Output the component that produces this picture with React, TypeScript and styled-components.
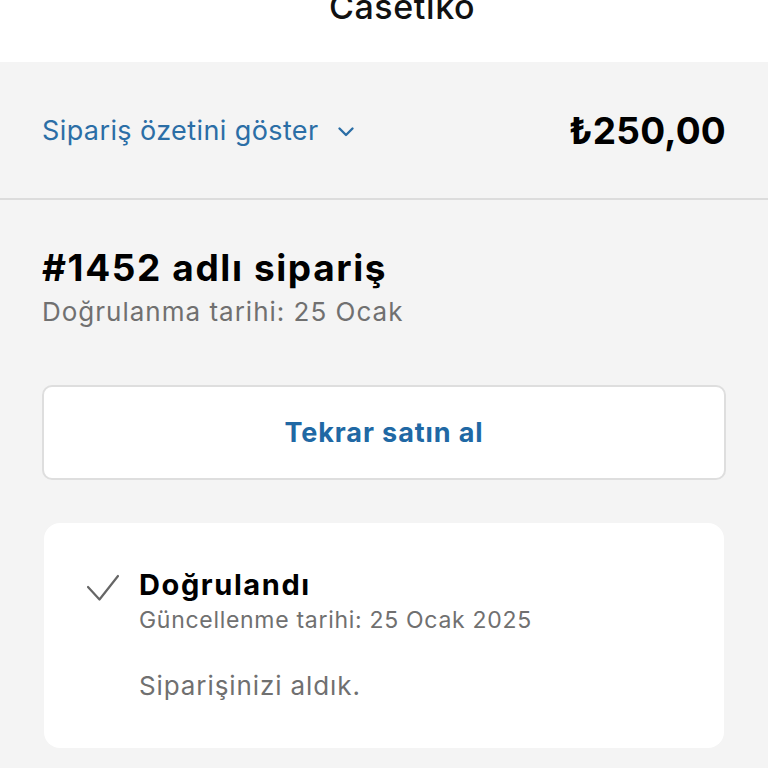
import React from "react";
import styled, { createGlobalStyle } from "styled-components";

const Global = createGlobalStyle`
  html, body { margin: 0; padding: 0; background: #f4f4f4; }
  body { font-family: Inter, "Noto Sans", sans-serif; -webkit-font-smoothing: antialiased; }
  * { box-sizing: border-box; }
`;

const Page = styled.div`
  width: 768px;
  height: 768px;
  overflow: hidden;
  display: flex;
  flex-direction: column;
  background: #f4f4f4;
`;

const Header = styled.header`
  height: 62px;
  flex: none;
  background: #ffffff;
  display: flex;
  justify-content: center;
  align-items: flex-start;
  padding-left: 36px;
  overflow: hidden;
`;

const Brand = styled.div`
  font-size: 34px;
  font-weight: 500;
  color: #111;
  line-height: 34px;
  margin-top: -10px;
  letter-spacing: 0.6px;
`;

const SummaryBar = styled.div`
  height: 138px;
  flex: none;
  border-bottom: 2px solid #dcdcdc;
  display: flex;
  align-items: center;
  justify-content: space-between;
  padding: 0 42px 0 42px;
`;

const SummaryToggle = styled.div`
  display: flex;
  align-items: center;
  gap: 18px;
  color: #2b6ea6;
  font-size: 27px;
  font-weight: 400;
  letter-spacing: 0.4px;
`;

const Chevron = styled.svg`
  margin-top: 3px;
`;

const Price = styled.div`
  font-size: 37px;
  font-weight: 700;
  color: #000;
  letter-spacing: 0.2px;
`;

const Body = styled.main`
  padding: 46px 42px 0;
  display: flex;
  flex-direction: column;
`;

const Title = styled.h1`
  margin: 0;
  font-size: 37px;
  font-weight: 700;
  color: #000;
  line-height: 44px;
  letter-spacing: 1.6px;
`;

const Sub = styled.div`
  font-size: 26px;
  color: #707070;
  line-height: 32px;
  margin-top: 6px;
  letter-spacing: 1px;
`;

const Button = styled.div`
  margin-top: 57px;
  height: 95px;
  background: #fff;
  border: 2px solid #dedede;
  border-radius: 10px;
  display: flex;
  align-items: center;
  justify-content: center;
  color: #2068a4;
  font-size: 27px;
  font-weight: 700;
  letter-spacing: 0.9px;
`;

const Card = styled.section`
  margin: 43px 2px 0;
  background: #fff;
  border-radius: 16px;
  padding: 45px 40px 46px 42px;
  display: flex;
  gap: 19px;
`;

const CheckIcon = styled.svg`
  flex: none;
  margin-top: 6px;
`;

const StatusText = styled.div`
  display: flex;
  flex-direction: column;
`;

const Status = styled.div`
  font-size: 29px;
  font-weight: 700;
  color: #000;
  line-height: 34px;
  letter-spacing: 1.6px;
`;

const Updated = styled.div`
  font-size: 23px;
  color: #707070;
  line-height: 28px;
  margin-top: 4px;
  letter-spacing: 0.7px;
`;

const Note = styled.div`
  margin-top: 36px;
  font-size: 26px;
  color: #707070;
  line-height: 32px;
  letter-spacing: 0.9px;
`;

export default function App() {
  return (
    <>
      <Global />
      <Page>
        <Header>
          <Brand>Casetiko</Brand>
        </Header>
        <SummaryBar>
          <SummaryToggle>
            <span>Sipariş özetini göster</span>
            <Chevron width="18" height="12" viewBox="0 0 18 12" fill="none">
              <path d="M2.5 2.5l6.5 6.5 6.5-6.5" stroke="#2b6ea6" strokeWidth="2.4" strokeLinecap="round" strokeLinejoin="round" />
            </Chevron>
          </SummaryToggle>
          <Price>₺250,00</Price>
        </SummaryBar>
        <Body>
          <Title>#1452 adlı sipariş</Title>
          <Sub>Doğrulanma tarihi: 25 Ocak</Sub>
          <Button>Tekrar satın al</Button>
          <Card>
            <CheckIcon width="34" height="28" viewBox="0 0 34 28" fill="none">
              <path d="M2 13l11.5 12.5L32 2" stroke="#666666" strokeWidth="2.2" strokeLinecap="round" strokeLinejoin="round" />
            </CheckIcon>
            <StatusText>
              <Status>Doğrulandı</Status>
              <Updated>Güncellenme tarihi: 25 Ocak 2025</Updated>
              <Note>Siparişinizi aldık.</Note>
            </StatusText>
          </Card>
        </Body>
      </Page>
    </>
  );
}
